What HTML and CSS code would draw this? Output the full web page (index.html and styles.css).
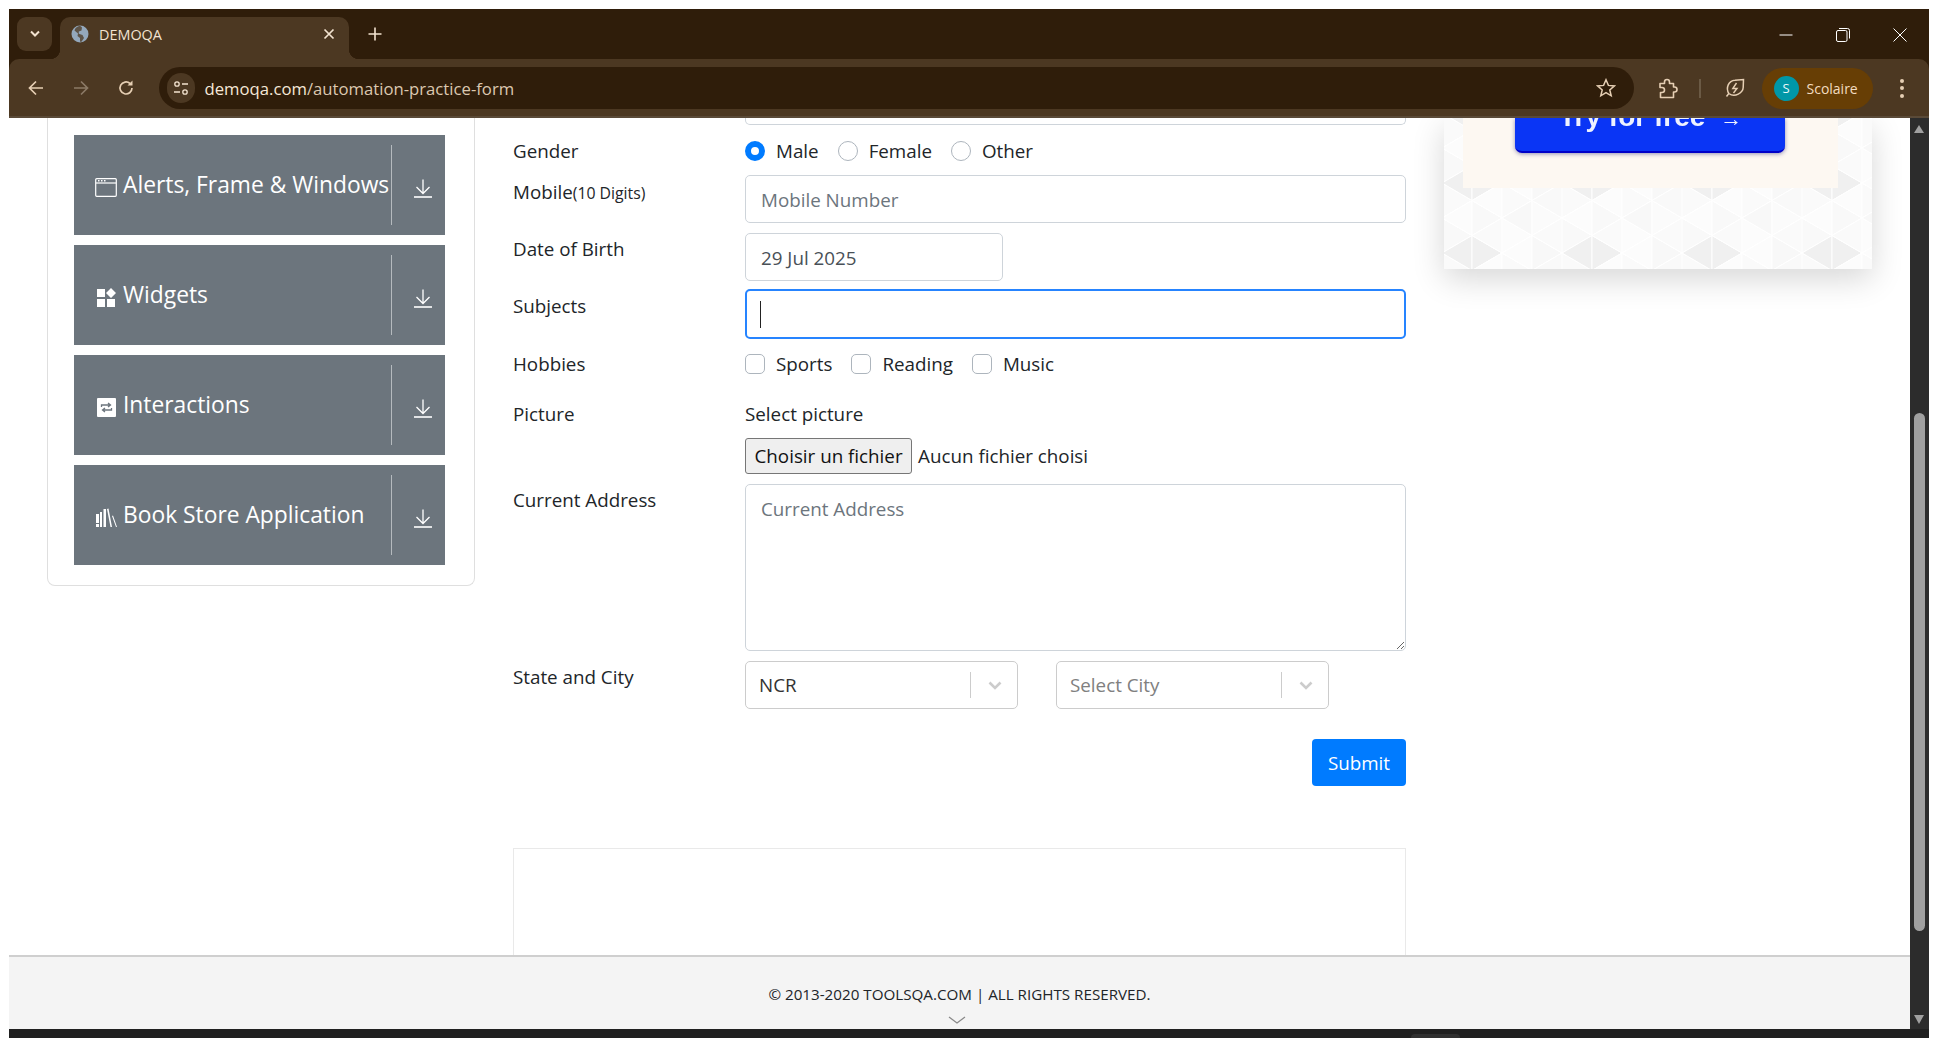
FILE: index.html
```html
<!DOCTYPE html>
<html lang="fr">
<head>
    <meta charset="UTF-8">
    <title>DEMOQA</title>
    <link rel="stylesheet" href="styles.css">
</head>
<body>
    <svg class="defs" width="0" height="0">
        <symbol id="down" viewBox="0 0 18 19">
            <path d="M9 0.5V14M2.5 8L9 14.5L15.5 8" fill="none" stroke="#fff" stroke-width="1.3"/>
            <path d="M0 18H18" stroke="#fff" stroke-width="1.6"/>
        </symbol>
        <symbol id="chevron" viewBox="0 0 20 20">
            <path d="M4.5 7.5L10 13L15.5 7.5" fill="none" stroke="#ccc" stroke-width="2.6"/>
        </symbol>
    </svg>

    <div class="window">
        <div class="tabstrip">
            <div class="tab-search">
                <svg width="12" height="8" viewBox="0 0 12 8"><path d="M2 1.500L6 5.500L10 1.500" fill="none" stroke="#f3e3d0" stroke-width="2"/></svg>
            </div>
            <div class="tab">
                <svg class="favicon" width="18" height="18" viewBox="0 0 18 18">
                    <circle cx="9" cy="9" r="8.500" fill="#94a8bc"/>
                    <path d="M9 .8C6 1.500 4 3 3.500 5.500L7 8.500L6.500 11L9 13V16.800H10.500L13 13L11.500 10L7.800 8.800V6.500L10.500 5.500L11 2.500Z" fill="#4c3822" opacity=".75"/>
                </svg>
                <span class="tab-title">DEMOQA</span>
                <svg class="tab-close" width="12" height="12" viewBox="0 0 12 12"><path d="M1.500 1.500L10.500 10.500M10.500 1.500L1.500 10.500" stroke="#f3e3d0" stroke-width="1.700"/></svg>
            </div>
            <svg class="tab-new" width="14" height="14" viewBox="0 0 14 14"><path d="M7 0.500V13.500M0.500 7H13.500" stroke="#f3e3d0" stroke-width="1.600"/></svg>
            <div class="win-controls">
                <svg width="14" height="14" viewBox="0 0 14 14"><path d="M0.500 7H13.500" stroke="#fff" stroke-width="1"/></svg>
                <svg width="14" height="14" viewBox="0 0 14 14"><rect x="0.500" y="2.500" width="10.500" height="11" rx="1.500" fill="none" stroke="#fff"/><path d="M3 .5H11.500Q13.500 .5 13.500 2.500V10.500" fill="none" stroke="#fff"/></svg>
                <svg width="14" height="14" viewBox="0 0 14 14"><path d="M0.500 0.500L13.500 13.500M13.500 0.500L0.500 13.500" stroke="#fff" stroke-width="1"/></svg>
            </div>
        </div>

        <div class="toolbar">
            <svg class="nav-icon nav-back" width="18" height="18" viewBox="0 0 18 18"><path d="M16 9H2.500M9 2.500L2.500 9L9 15.500" fill="none" stroke="#e6cfb4" stroke-width="1.700"/></svg>
            <svg class="nav-icon" width="18" height="18" viewBox="0 0 18 18"><path d="M2 9H15.500M9 2.500L15.500 9L9 15.500" fill="none" stroke="#8b7a66" stroke-width="1.700"/></svg>
            <svg class="nav-icon" width="18" height="18" viewBox="0 0 18 18"><path d="M15 9A6 6 0 1 1 13 4.500" fill="none" stroke="#e6cfb4" stroke-width="1.700"/><path d="M15.500 1.500V6.500H10.500Z" fill="#e6cfb4"/></svg>
            <div class="omnibox">
                <div class="site-info">
                    <svg width="16" height="16" viewBox="0 0 16 16"><circle cx="4" cy="4" r="2.200" fill="none" stroke="#f3e3d0" stroke-width="1.300"/><path d="M9 4H15M1 12H7" stroke="#f3e3d0" stroke-width="1.300"/><circle cx="12" cy="12" r="2.200" fill="none" stroke="#f3e3d0" stroke-width="1.300"/></svg>
                </div>
                <span class="url"><span class="url-host">demoqa.com</span>/automation-practice-form</span>
                <svg class="star" width="20" height="20" viewBox="0 0 20 20"><path d="M10 1.800L12.400 7.400L18.400 7.900L13.800 11.900L15.200 17.800L10 14.700L4.800 17.800L6.200 11.900L1.600 7.900L7.600 7.400Z" fill="none" stroke="#e6cfb4" stroke-width="1.500"/></svg>
            </div>
            <svg class="puzzle" width="21" height="21" viewBox="0 0 21 21"><path d="M3 5.500H7.500V4A2.500 2.500 0 0 1 12.500 4V5.500H16.500V9H17.500A2.500 2.500 0 0 1 17.500 14H16.500V19.500H3.500V14.500H5A2.500 2.500 0 0 0 5 9.500H3Z" fill="none" stroke="#e6cfb4" stroke-width="1.600" stroke-linejoin="round"/></svg>
            <span class="tool-sep"></span>
            <svg class="leaf" width="20" height="20" viewBox="0 0 20 20"><path d="M3.800 15.500C.5 10 3.500 2.500 10 2.200L18.500 1.500L18.200 9.500C18 14.500 10 20 3.800 15.500L1.500 18.500" fill="none" stroke="#e6cfb4" stroke-width="1.500"/><path d="M11.500 5L7.800 10.500H12L8.500 15" fill="none" stroke="#e6cfb4" stroke-width="1.400"/></svg>
            <div class="profile">
                <span class="avatar">S</span>
                <span class="profile-name">Scolaire</span>
            </div>
            <div class="kebab"><span></span><span></span><span></span></div>
        </div>

        <div class="viewport">
            <div class="page">
                <div class="page-body">
                    <aside class="sidebar">
                        <div class="group">
                            <svg class="group-icon" width="22" height="19" viewBox="0 0 22 19"><rect x="0.700" y="0.700" width="20.600" height="17.600" rx="1" fill="none" stroke="#fff" stroke-width="1.200"/><path d="M1 5H21" stroke="#fff" stroke-width="1.200"/><path d="M3 2.800H4.500M6 2.800H7.500M9 2.800H10.500" stroke="#fff" stroke-width="1.400"/></svg>
                            <span class="group-label">Alerts, Frame &amp; Windows</span>
                            <span class="group-sep"></span>
                            <svg class="group-down" width="18" height="19"><use href="#down"/></svg>
                        </div>
                        <div class="group">
                            <svg class="group-icon" width="22" height="19" viewBox="0 0 22 19"><path d="M2 1H10V9H2ZM2 11H10V19H2ZM12 11H20V19H12ZM16 0L21 5L16 10L11 5Z" fill="#fff"/></svg>
                            <span class="group-label">Widgets</span>
                            <span class="group-sep"></span>
                            <svg class="group-down" width="18" height="19"><use href="#down"/></svg>
                        </div>
                        <div class="group">
                            <svg class="group-icon" width="22" height="19" viewBox="0 0 22 19"><rect x="2" y="0" width="19" height="19" rx="1" fill="#fff"/><path d="M6.500 9V7H15M13 5L15.500 7L13 9M16.500 10V12H8M10 10L7.500 12L10 14" fill="none" stroke="#6c757d" stroke-width="1.300"/></svg>
                            <span class="group-label">Interactions</span>
                            <span class="group-sep"></span>
                            <svg class="group-down" width="18" height="19"><use href="#down"/></svg>
                        </div>
                        <div class="group">
                            <svg class="group-icon" width="22" height="19" viewBox="0 0 22 19"><path d="M1 6H4V15H1ZM1 16H4V19H1ZM5 4H7V19H5ZM8.500 1H11V19H8.500ZM12 1L13.500 .5L17 19H15.500ZM17 8L18 7.500L22 19H21Z" fill="#fff"/></svg>
                            <span class="group-label">Book Store Application</span>
                            <span class="group-sep"></span>
                            <svg class="group-down" width="18" height="19"><use href="#down"/></svg>
                        </div>
                    </aside>

                    <main class="form-col">
                        <div class="input-clip"></div>

                        <div class="row row-gender">
                            <label class="label">Gender</label>
                            <div class="choices">
                                <span class="choice"><span class="radio checked"></span>Male</span>
                                <span class="choice"><span class="radio"></span>Female</span>
                                <span class="choice"><span class="radio"></span>Other</span>
                            </div>
                        </div>
                        <div class="row row-mobile">
                            <label class="label label-mobile">Mobile<small>(10 Digits)</small></label>
                            <input class="field" type="text" placeholder="Mobile Number">
                        </div>
                        <div class="row row-date">
                            <label class="label label-date">Date of Birth</label>
                            <input class="field field-date" type="text" value="29 Jul 2025">
                        </div>
                        <div class="row row-subjects">
                            <label class="label label-subjects">Subjects</label>
                            <div class="field field-focus"><span class="caret"></span></div>
                        </div>
                        <div class="row row-hobbies">
                            <label class="label">Hobbies</label>
                            <div class="choices">
                                <span class="choice"><span class="checkbox"></span>Sports</span>
                                <span class="choice"><span class="checkbox"></span>Reading</span>
                                <span class="choice"><span class="checkbox"></span>Music</span>
                            </div>
                        </div>
                        <div class="row row-picture">
                            <label class="label">Picture</label>
                            <div class="picture">
                                <div class="picture-title">Select picture</div>
                                <div class="file-line">
                                    <button class="file-btn" type="button">Choisir un fichier</button>
                                    <span>Aucun fichier choisi</span>
                                </div>
                            </div>
                        </div>
                        <div class="row row-address">
                            <label class="label label-address">Current Address</label>
                            <textarea class="field field-area" placeholder="Current Address"></textarea>
                        </div>
                        <div class="row row-state">
                            <label class="label label-state">State and City</label>
                            <div class="selects">
                                <div class="select">
                                    <span class="select-value">NCR</span>
                                    <span class="select-sep"></span>
                                    <svg class="select-arrow" width="20" height="20"><use href="#chevron"/></svg>
                                </div>
                                <div class="select">
                                    <span class="select-value select-placeholder">Select City</span>
                                    <span class="select-sep"></span>
                                    <svg class="select-arrow" width="20" height="20"><use href="#chevron"/></svg>
                                </div>
                            </div>
                        </div>
                        <div class="submit-line">
                            <button class="submit" type="button">Submit</button>
                        </div>
                        <div class="ad-box"></div>
                    </main>

                    <div class="ad-col">
                        <div class="ad">
                            <svg class="ad-pattern" width="100%" height="100%">
                                <defs>
                                    <pattern id="tri" width="120" height="70" patternUnits="userSpaceOnUse" x="-2" y="-5">
                                        <g stroke="#fff" stroke-width="1">
                                            <polygon points="0,0 0,35 30,17.500" fill="#fafafa"/>
                                            <polygon points="0,35 0,70 30,52.500" fill="#f9f9f9"/>
                                            <polygon points="30,17.500 30,52.500 0,35" fill="#fcfcfc"/>
                                            <polygon points="30,-17.500 30,17.500 0,0" fill="#f0f0f0"/>
                                            <polygon points="30,52.500 30,87.500 0,70" fill="#f0f0f0"/>
                                            <polygon points="30,-17.500 30,17.500 60,0" fill="#f0f0f0"/>
                                            <polygon points="30,52.500 30,87.500 60,70" fill="#f0f0f0"/>
                                            <polygon points="30,17.500 30,52.500 60,35" fill="#f9f9f9"/>
                                            <polygon points="60,0 60,35 30,17.500" fill="#fcfcfc"/>
                                            <polygon points="60,35 60,70 30,52.500" fill="#fafafa"/>
                                            <polygon points="60,0 60,35 90,17.500" fill="#fafafa"/>
                                            <polygon points="60,35 60,70 90,52.500" fill="#fcfcfc"/>
                                            <polygon points="90,17.500 90,52.500 60,35" fill="#f8f8f8"/>
                                            <polygon points="90,-17.500 90,17.500 60,0" fill="#fcfcfc"/>
                                            <polygon points="90,52.500 90,87.500 60,70" fill="#fcfcfc"/>
                                            <polygon points="90,-17.500 90,17.500 120,0" fill="#f8f8f8"/>
                                            <polygon points="90,52.500 90,87.500 120,70" fill="#f8f8f8"/>
                                            <polygon points="90,17.500 90,52.500 120,35" fill="#fbfbfb"/>
                                            <polygon points="120,0 120,35 90,17.500" fill="#f9f9f9"/>
                                            <polygon points="120,35 120,70 90,52.500" fill="#fafafa"/>
                                        </g>
                                    </pattern>
                                </defs>
                                <rect width="100%" height="100%" fill="url(#tri)"/>
                            </svg>
                            <div class="ad-inner">
                                <div class="ad-btn"><span class="ad-btn-text">Try for free<span class="ad-arrow">→</span></span></div>
                            </div>
                        </div>
                    </div>
                </div>

                <footer class="footer">
                    <span class="footer-text">© 2013-2020 TOOLSQA.COM | ALL RIGHTS RESERVED.</span>
                    <svg class="footer-chevron" width="18" height="8" viewBox="0 0 18 8"><path d="M1 1L9 7L17 1" fill="none" stroke="#888" stroke-width="1.200"/></svg>
                </footer>
            </div>

            <div class="scrollbar">
                <span class="scroll-up"></span>
                <span class="scroll-thumb"></span>
                <span class="scroll-down"></span>
            </div>
        </div>

        <div class="bottom-band"><span class="bottom-tab"></span></div>
    </div>
</body>
</html>
```

FILE: styles.css
```css
* {
    box-sizing: border-box;
}

body {
    margin: 0;
    background: white;
    font-family: 'Open Sans', 'Noto Sans', sans-serif;
    color: #212529;
    overflow: hidden;
}

.defs {
    position: absolute;
}

.window {
    display: flex;
    flex-direction: column;
    width: 1920px;
    height: 1029px;
    margin: 9px 0 0 9px;
    background: #2f1d0a;
}

/* browser chrome */
.tabstrip {
    display: flex;
    align-items: flex-start;
    height: 50px;
    padding: 8px 0 0 8px;
    flex-shrink: 0;
}

.tab-search {
    display: flex;
    align-items: center;
    justify-content: center;
    width: 35px;
    height: 34px;
    border-radius: 9px;
    background: #4c3822;
}

.tab {
    position: relative;
    display: flex;
    align-items: center;
    width: 289px;
    height: 42px;
    margin-left: 8px;
    padding: 0 14px 8px 11px;
    border-radius: 10px 10px 0 0;
    background: #4c3822;
}

.tab::before,
.tab::after {
    content: "";
    position: absolute;
    bottom: 0;
    width: 10px;
    height: 10px;
}

.tab::before {
    left: -10px;
    background: radial-gradient(circle at 0 0, transparent 10px, #4c3822 10.500px);
}

.tab::after {
    right: -10px;
    background: radial-gradient(circle at 100% 0, transparent 10px, #4c3822 10.500px);
}

.tab-title {
    flex: 1;
    margin-left: 10px;
    font-size: 14.400px;
    color: #f3e3d0;
}

.tab-new {
    margin: 10px 0 0 19px;
}

.win-controls {
    display: flex;
    gap: 43px;
    margin-left: auto;
    margin-right: 22px;
    padding-top: 11px;
}

.toolbar {
    display: flex;
    align-items: center;
    height: 59px;
    padding-top: 1px;
    background: #4c3822;
    border-bottom: 2px solid #5a4a38;
    border-radius: 10px 10px 0 0;
    flex-shrink: 0;
}

.nav-icon {
    margin: 0 13.500px;
}

.nav-back {
    margin-left: 18px;
}

.omnibox {
    display: flex;
    align-items: center;
    width: 1475px;
    height: 42px;
    margin-left: 10px;
    padding: 0 18px 0 8px;
    border-radius: 21px;
    background: #2f1d0a;
}

.site-info {
    display: flex;
    align-items: center;
    justify-content: center;
    width: 28px;
    height: 30px;
    border-radius: 15px;
    background: #4c3822;
}

.url {
    flex: 1;
    margin-left: 10px;
    font-size: 16.700px;
    color: #dcc8b0;
}

.url-host {
    color: #f6e8d8;
}

.puzzle {
    margin-left: 23px;
}

.tool-sep {
    width: 2px;
    height: 19px;
    margin-left: 21px;
    background: #6b5a45;
}

.leaf {
    margin-left: 24px;
}

.profile {
    display: flex;
    align-items: center;
    width: 111px;
    height: 41px;
    margin-left: 17px;
    padding-left: 12px;
    border-radius: 21px;
    background: #673e05;
}

.avatar {
    display: flex;
    align-items: center;
    justify-content: center;
    width: 25px;
    height: 25px;
    border-radius: 50%;
    background: #0097a7;
    color: #e8f8fa;
    font-size: 13px;
}

.profile-name {
    margin-left: 8px;
    font-size: 14px;
    color: #f3dcc0;
}

.kebab {
    display: flex;
    flex-direction: column;
    gap: 3.500px;
    margin-left: 27px;
}

.kebab span {
    width: 4px;
    height: 4px;
    border-radius: 50%;
    background: #e6cfb4;
}

/* page */
.viewport {
    display: flex;
    flex: 1;
    min-height: 0;
    background: white;
}

.page {
    display: flex;
    flex-direction: column;
    flex: 1;
    min-width: 0;
}

.page-body {
    display: flex;
    flex: 1;
    min-height: 0;
    padding-left: 38px;
    overflow: hidden;
}

.sidebar {
    display: flex;
    flex-direction: column;
    gap: 10px;
    width: 428px;
    height: 468px;
    padding: 17px 29px 0 26px;
    border: 1px solid #dfdfdf;
    border-top: none;
    border-radius: 0 0 8px 8px;
    flex-shrink: 0;
}

.group {
    display: flex;
    align-items: center;
    height: 100px;
    padding: 10px 0 10px 21px;
    background: #6c757d;
    color: white;
    flex-shrink: 0;
}

.group-icon {
    flex-shrink: 0;
    margin: 4px 6px 0 0;
}

.group-label {
    width: 268px;
    padding-bottom: 2px;
    font-size: 22.800px;
    white-space: nowrap;
}

.group-sep {
    width: 1px;
    height: 80px;
    background: #b5babe;
}

.group-down {
    margin: 7px 0 0 22px;
}

.form-col {
    display: flex;
    flex-direction: column;
    width: 893px;
    margin-left: 38px;
    font-size: 18.800px;
    flex-shrink: 0;
}

.input-clip {
    height: 7px;
    margin-left: 232px;
    border: 1px solid #ced4da;
    border-top: none;
    border-radius: 0 0 5px 5px;
    flex-shrink: 0;
}

.row {
    display: flex;
    flex-shrink: 0;
}

.label {
    width: 232px;
    line-height: 28px;
    flex-shrink: 0;
}

.label small {
    font-size: 15.800px;
}

.field {
    flex: 1;
    height: 48px;
    padding: 2px 15px 0;
    border: 1px solid #ced4da;
    border-radius: 5px;
    background: white;
    font: inherit;
    color: #495057;
    outline: none;
}

.field::placeholder {
    color: #6c757d;
}

.row-gender {
    margin-top: 12px;
}

.row-mobile {
    margin-top: 10px;
}

.label-mobile {
    padding-top: 3px;
}

.row-date {
    margin-top: 10px;
}

.label-date {
    padding-top: 2px;
}

.field-date {
    flex: none;
    width: 258px;
}

.row-subjects {
    margin-top: 8px;
}

.label-subjects {
    padding-top: 3px;
}

.field-focus {
    position: relative;
    height: 50px;
    border: 2px solid #2684ff;
}

.caret {
    position: absolute;
    left: 13px;
    top: 10px;
    width: 1px;
    height: 27px;
    background: #222;
}

.row-hobbies {
    margin-top: 11px;
}

.row-picture {
    margin-top: 22px;
}

.row-address {
    margin-top: 10px;
}

.label-address {
    padding-top: 2px;
}

.field-area {
    height: 167px;
    padding: 11px 15px;
    resize: vertical;
}

.row-state {
    margin-top: 10px;
}

.label-state {
    padding-top: 2px;
}

.choices {
    display: flex;
    align-items: center;
    height: 28px;
}

.choice {
    display: flex;
    align-items: center;
    margin-right: 19px;
}

.radio,
.checkbox {
    width: 20px;
    height: 20px;
    margin-right: 11px;
    border: 1px solid #adb5bd;
    background: white;
}

.radio {
    border-radius: 50%;
}

.radio.checked {
    border: 6px solid #007bff;
}

.checkbox {
    border-radius: 5px;
}

.picture-title {
    line-height: 28px;
}

.file-line {
    display: flex;
    align-items: center;
    gap: 6px;
    margin-top: 10px;
}

.file-btn {
    height: 36px;
    padding: 0 8.500px;
    border: 1px solid #767676;
    border-radius: 3px;
    background: #efefef;
    font: inherit;
    color: #111;
}

.selects {
    display: flex;
    gap: 38px;
}

.select {
    display: flex;
    align-items: center;
    width: 273px;
    height: 48px;
    padding-left: 13px;
    border: 1px solid #ccc;
    border-radius: 5px;
}

.select-value {
    flex: 1;
    color: #333;
}

.select-placeholder {
    color: #808080;
}

.select-sep {
    width: 1px;
    height: 26px;
    background: #ccc;
}

.select-arrow {
    margin: 0 12px 0 14px;
}

.submit-line {
    display: flex;
    justify-content: flex-end;
    margin-top: 30px;
    flex-shrink: 0;
}

.submit {
    width: 94px;
    height: 47px;
    border: none;
    border-radius: 4px;
    background: #007bff;
    color: white;
    font: inherit;
}

.ad-box {
    flex: 1;
    margin-top: 62px;
    border: 1px solid #e9e9e9;
    border-bottom: none;
}

.ad-col {
    width: 428px;
    margin-left: 38px;
    flex-shrink: 0;
}

.ad {
    position: relative;
    height: 151px;
    box-shadow: 0 10px 30px rgba(0, 0, 0, 0.16);
}

.ad-pattern {
    position: absolute;
    left: 0;
    top: 0;
}

.ad-inner {
    position: relative;
    height: 70px;
    margin: 0 34px 0 19px;
    padding-left: 52px;
    background: #fdf8f2;
}

.ad-btn {
    width: 270px;
    height: 35px;
    padding-left: 44px;
    border-radius: 0 0 7px 7px;
    border-bottom: 2px solid #0000c8;
    background: #0a35f5;
    box-shadow: 0 1px 4px rgba(40, 40, 120, 0.5);
    overflow: hidden;
}

.ad-btn-text {
    display: block;
    margin-top: -15px;
    font-family: 'Liberation Sans', sans-serif;
    font-size: 28px;
    font-weight: bold;
    line-height: 27px;
    white-space: nowrap;
    color: #eef2ff;
    filter: blur(0.6px);
}

.ad-arrow {
    margin-left: 15px;
    font-size: 22px;
}

.footer {
    display: flex;
    flex-direction: column;
    align-items: center;
    height: 74px;
    padding-top: 27px;
    border-top: 2px solid #cfcfcf;
    background: #f4f4f4;
    flex-shrink: 0;
}

.footer-text {
    font-size: 15.200px;
    line-height: 20px;
}

.footer-chevron {
    margin: 12px 5px 0 0;
}

.scrollbar {
    position: relative;
    width: 19px;
    background: #2c2c2c;
    flex-shrink: 0;
}

.scroll-up,
.scroll-down {
    position: absolute;
    left: 4px;
    width: 0;
    height: 0;
    border-left: 5.500px solid transparent;
    border-right: 5.500px solid transparent;
}

.scroll-up {
    top: 7px;
    border-bottom: 8px solid #a0a0a0;
}

.scroll-down {
    bottom: 5px;
    border-top: 9px solid #a0a0a0;
}

.scroll-thumb {
    position: absolute;
    left: 4px;
    top: 295px;
    width: 11px;
    height: 518px;
    border-radius: 6px;
    background: #a0a0a0;
}

.bottom-band {
    height: 9px;
    padding-left: 1402px;
    background: #202020;
    flex-shrink: 0;
}

.bottom-tab {
    display: block;
    width: 49px;
    height: 4px;
    margin-top: 5px;
    border-radius: 4px 4px 0 0;
    background: #303030;
}
```
